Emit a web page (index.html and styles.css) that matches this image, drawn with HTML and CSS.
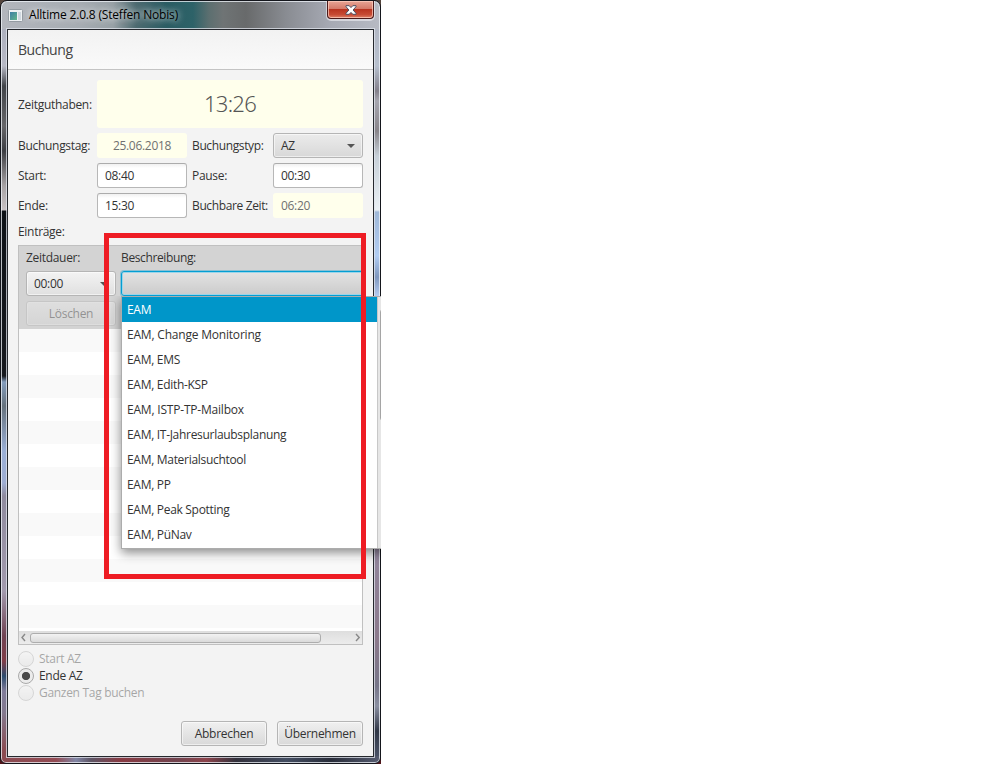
FILE: index.html
```
<!DOCTYPE html>
<html lang="de">
<head>
<meta charset="utf-8">
<title>Alltime 2.0.8 (Steffen Nobis)</title>
<link rel="stylesheet" href="styles.css">
</head>
<body>
<div class="desktop">
<div class="window">
  <div class="titlebar">
    <svg class="app-icon" width="15" height="13" viewBox="0 0 15 13"><defs><linearGradient id="ic" x1="0" y1="0" x2="1" y2="1"><stop offset="0" stop-color="#3d7fa5"/><stop offset="1" stop-color="#62b58a"/></linearGradient></defs><rect x=".5" y=".5" width="14" height="12" rx="1" fill="#eef1f3" stroke="#949ba2"/><rect x="2" y="3" width="7" height="8" fill="url(#ic)"/><rect x="10" y="3" width="3" height="8" fill="#cfd7df"/></svg>
    <span class="title">Alltime 2.0.8 (Steffen Nobis)</span>
    <div class="close"><svg width="12" height="10" viewBox="0 0 12 10"><path d="M1 .7h3.2L6 2.6 7.8.7H11v1L8.1 5 11 8.3v1H7.8L6 7.4 4.2 9.3H1v-1L3.9 5 1 1.700z" fill="#fff" stroke="#4c4f62" stroke-width="1"/></svg></div>
  </div>
  <div class="content">
    <div class="header"><span>Buchung</span></div>
    <div class="main">
      <div class="form">
        <span class="label">Zeitguthaben:</span><div class="ro big"><span>13:26</span></div>
        <span class="label">Buchungstag:</span><div class="ro center"><span>25.06.2018</span></div>
        <span class="label tight">Buchungstyp:</span><div class="combo"><span>AZ</span><i class="arrow"></i></div>
        <span class="label">Start:</span><div class="field">08:40</div>
        <span class="label">Pause:</span><div class="field">00:30</div>
        <span class="label">Ende:</span><div class="field">15:30</div>
        <span class="label tight">Buchbare Zeit:</span><div class="ro">06:20</div>
      </div>
      <div class="label entries">Einträge:</div>
      <div class="list">
        <div class="cell">
          <span class="label">Zeitdauer:</span><span class="label tight">Beschreibung:</span>
          <div class="combo light"><span>00:00</span><i class="arrow"></i></div><div class="combo focus"></div>
          <div class="button disabled">Löschen</div>
        </div>
        <div class="stripes"></div>
        <div class="hscroll">
          <svg width="11" height="13" viewBox="0 0 11 13"><path d="M6 3 3 6.500l3 3.500" fill="none" stroke="#888" stroke-width="1.400"/></svg>
          <div class="thumb"></div>
          <svg class="right" width="11" height="13" viewBox="0 0 11 13"><path d="m5 3 3.200 3.500L5 10" fill="none" stroke="#888" stroke-width="1.400"/></svg>
        </div>
      </div>
      <div class="radios">
        <div class="radio off"><i></i><span>Start AZ</span></div>
        <div class="radio on"><i></i><span>Ende AZ</span></div>
        <div class="radio off"><i></i><span>Ganzen Tag buchen</span></div>
      </div>
      <div class="actions"><div class="button">Abbrechen</div><div class="button">Übernehmen</div></div>
    </div>
  </div>
</div>
<div class="popup-clip">
  <div class="popup">
    <div class="items">
      <div class="item selected">EAM</div>
      <div class="item wide">EAM, Change Monitoring</div>
      <div class="item">EAM, EMS</div>
      <div class="item">EAM, Edith-KSP</div>
      <div class="item wide">EAM, ISTP-TP-Mailbox</div>
      <div class="item">EAM, IT-Jahresurlaubsplanung</div>
      <div class="item">EAM, Materialsuchtool</div>
      <div class="item">EAM, PP</div>
      <div class="item">EAM, Peak Spotting</div>
      <div class="item">EAM, PüNav</div>
    </div>
    <div class="vscroll"><div class="vthumb"></div></div>
  </div>
</div>
<div class="marker"></div>
</div>
</body>
</html>
```
FILE: styles.css
```
* { box-sizing: border-box; }
body { margin: 0; background: #fff; font: 12px/17px "Open Sans", "Noto Sans", sans-serif; letter-spacing: -0.3px; color: #333; white-space: nowrap; }
.desktop { position: relative; width: 381px; height: 764px; background: linear-gradient(#55453d, #1a1418 20%, #14161c 80%, #50151a); overflow: hidden; }
.window {
  height: 764px; padding: 2px 7px 7px; border: 1px solid #14161c; border-radius: 7px 7px 6px 6px;
  box-shadow: inset 0 0 0 1px rgba(240, 244, 250, .75);
  background:
    linear-gradient(90deg, #b3b6bd 0, #a6acb2 80px, #98a1a6 112px, #4d6a70 135px, #2b5c63 165px, #2d6268 192px, #5c6f70 208px, #6f7475 222px, #686a6b 245px, #898c92 285px, #a7aab4 330px, #b7bac3) 0 0 / 100% 28px no-repeat,
    linear-gradient(90deg, #8b4b51, #934b53 55px, #8186a5 75px, #5e5565 90px, #883a42 120px, #71434e 175px, #8c434b 205px, #33313c 235px, #434d61 285px, #292d3a 330px, #565c70) 0 100% / 100% 7px no-repeat,
    linear-gradient(#a5a9b8 0, #b7b9c5 65px, #414449 85px, #666669 125px, #3c3d42 150px, #a7a3a5 185px, #c8c2c4 209px, #0e1217 210px, #17191e 375px, #849dbd 381px, #66727d 405px, #9aafd6 450px, #9eadd2 482px, #8f8b9e 495px, #a29aad 590px, #704353 635px, #803d48 660px, #2d4b6d 675px, #807c99 690px, #83798e 712px, #8b4b51 750px) 0 0 / 7px 100% no-repeat,
    linear-gradient(#afb2bd 0, #b7c0ce 65px, #83808b 90px, #a6a6af 100px, #89858a 130px, #c7d0d8 155px, #eaf0f4 209px, #9fb8d8 211px, #b2cdf2 255px, #8098be 276px, #b4cbf0 295px, #92879e 540px, #8b798b 640px, #777689 685px, #8a8fa1 705px, #303746 730px, #515a70 764px) 100% 0 / 7px 100% no-repeat;
}
.titlebar { height: 26px; display: flex; align-items: flex-start; color: #000; }
.app-icon { margin: 6px 6px 0 0; }
.title { margin-top: 3px; text-shadow: 0 0 6px rgba(255, 255, 255, .9), 0 0 8px rgba(255, 255, 255, .5); letter-spacing: -0.18px; }
.close { width: 47px; height: 18px; margin: -2px -1px 0 auto; display: flex; justify-content: center; align-items: center; border: 1px solid #4b1a1a; border-top: 0; border-radius: 0 0 4px 4px; box-shadow: inset 0 0 0 1px rgba(255, 210, 195, .7), 0 1px 0 1px rgba(240, 240, 245, .6); background: linear-gradient(#e8a595 0, #d47867 48%, #b93420 50%, #c74b34 80%, #dd8168); }
.content { height: 728px; width: 367px; margin-left: -1px; border: 1px solid #25282d; box-shadow: 0 0 0 1px rgba(225, 230, 238, .75); background: #f3f3f3; display: flex; flex-direction: column; }
.header { height: 40px; flex: none; padding: 10px 10px 0; border-bottom: 1px solid #c4c4c4; background: linear-gradient(#f2f2f2, #fafafa); font-size: 14px; line-height: 20px; letter-spacing: -0.45px; color: #444; }
.main { padding: 10px 10px 0; }
.form { display: grid; grid-template-columns: 74px 90px 76px 90px; grid-template-rows: 48px 25px 25px 25px; gap: 5px; align-items: center; }
.label { color: #333; }
.tight { letter-spacing: -0.37px; }
.ro, .field, .combo { height: 25px; display: flex; align-items: center; padding: 0 8px; border-radius: 3px; }
.ro { background: #ffffec; color: #707070; }
.ro.center { justify-content: center; }
.ro.big { grid-column: 2 / 5; height: 48px; justify-content: center; padding-bottom: 2px; font-family: "Noto Sans", "Open Sans", sans-serif; font-size: 22px; font-weight: 300; letter-spacing: -0.7px; color: #555; }
.field { background: linear-gradient(#f1f1f1, #fff 4px); border: 1px solid #b7b7b7; border-top-color: #acacac; padding: 0 7px; color: #333; }
.combo, .button { border: 1px solid #b5b5b5; border-radius: 3px; background: linear-gradient(#ebebeb, #d8d8d8); box-shadow: inset 0 0 0 1px rgba(255, 255, 255, .55); }
.combo { padding: 0 7px; justify-content: space-between; }
.arrow { border: 4px solid transparent; border-top-color: #555; border-bottom: 0; }
.entries { height: 17px; margin: 5px 0; }
.list { height: 400px; border: 1px solid #c0c0c0; background: #fff; overflow: hidden; }
.cell { height: 83px; padding: 4px 0 0 7px; background: #d3d3d3; display: grid; grid-template-columns: 90px 246px; grid-template-rows: 16px 25px 25px; column-gap: 5px; row-gap: 5px; }
.cell .label { line-height: 15px; }
.combo.light { background: linear-gradient(#f3f3f3, #e0e0e0); }
.combo.focus { border: 1px solid #039ed3; box-shadow: inset 0 0 0 1px #9cd5e9, 0 0 0 1px rgba(3, 158, 211, .35); background: linear-gradient(#e3e3e3, #cbcbcb); }
.button { height: 25px; display: flex; align-items: center; justify-content: center; background: linear-gradient(#f0f0f0, #d9d9d9); }
.button.disabled { opacity: .4; }
.stripes { height: 302px; background: repeating-linear-gradient(#f9f9f9 0 23px, #fff 23px 46px); }
.hscroll { height: 13px; display: flex; align-items: center; background: linear-gradient(#dedede, #ececec); }
.hscroll .right { margin-left: auto; }
.thumb { width: 291px; height: 10px; border: 1px solid #adadad; border-radius: 3px; background: linear-gradient(#f3f3f3, #dadada); }
.radios { margin-top: 5px; }
.radio { height: 17px; display: flex; align-items: center; gap: 5px; }
.radio i { width: 16px; height: 16px; border: 1px solid #aaa; border-radius: 50%; background: linear-gradient(#f5f5f5, #dfdfdf); }
.radio.off { opacity: .4; }
.radio.on i { background: radial-gradient(circle, #4b4b4b 0 3.7px, #ececec 4.5px); }
.actions { display: flex; justify-content: flex-end; gap: 10px; margin-top: 20px; }
.actions .button { width: 86px; }
/* The drop-down list overlays the dialog and is cut off at its right edge. */
.popup-clip { position: absolute; left: 111px; top: 296px; width: 270px; height: 273px; padding-left: 10px; overflow: hidden; }
.popup { width: 272px; height: 253px; border: 1px solid #acacac; background: #fff; box-shadow: 0 4px 10px rgba(0, 0, 0, .45); display: flex; }
.items { width: 255px; flex: none; }
.item { height: 25px; padding: 4px 0 0 5px; line-height: 17px; }
.item.wide { letter-spacing: -0.2px; }
.item.selected { background: #0096c9; color: #fff; }
.vscroll { flex: 1; padding: 12px 0 0 2px; background: #e6e6e6; border-left: 1px solid #c8c8c8; }
.vthumb { height: 112px; border: 1px solid #a5a5a5; border-radius: 3px; background: #eee; }
.marker { position: absolute; left: 104px; top: 233px; width: 262px; height: 346px; border: 5px solid #ee1c24; }
```
